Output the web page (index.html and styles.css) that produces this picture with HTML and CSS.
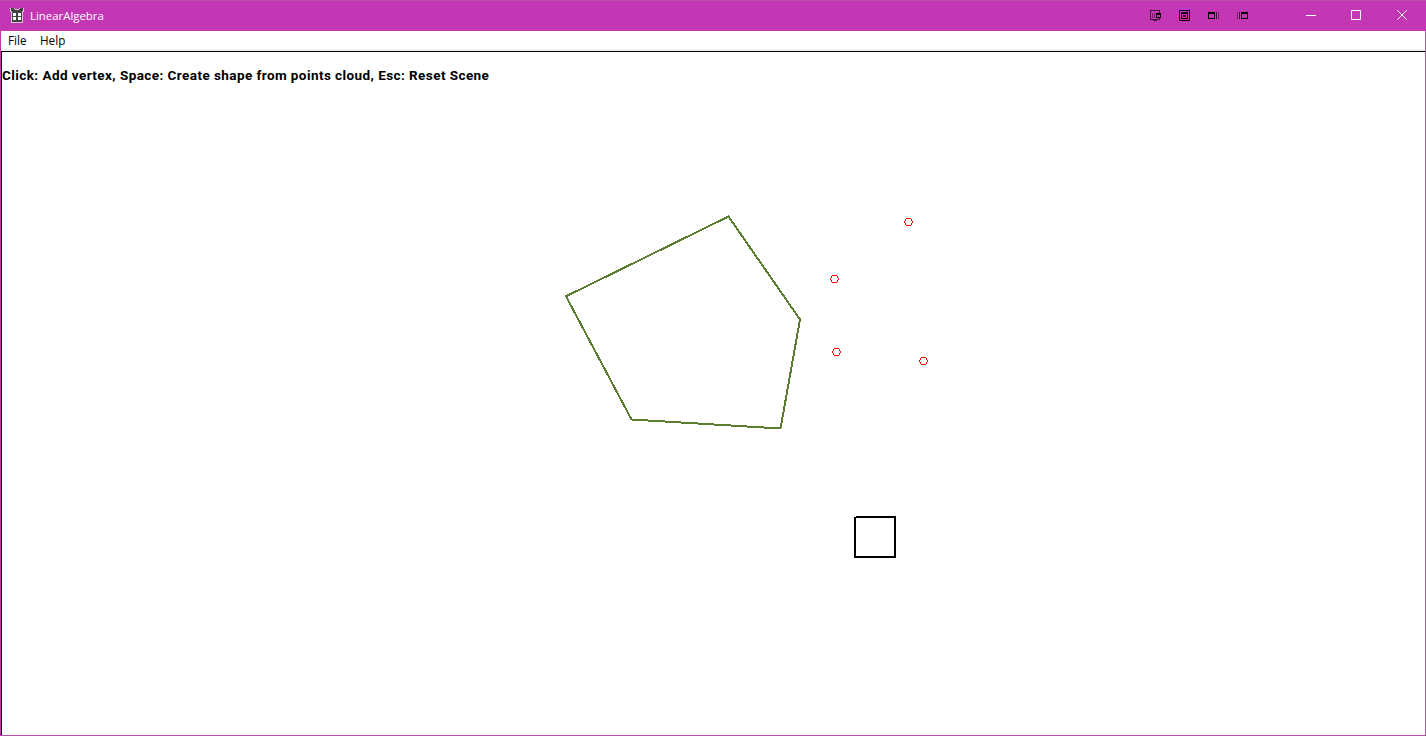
FILE: index.html
```html
<!DOCTYPE html>
<html lang="en">
<head>
<meta charset="utf-8">
<title>LinearAlgebra</title>
<link rel="stylesheet" href="styles.css">
</head>
<body>
<div class="window">
  <header class="titlebar">
    <svg class="app-icon" width="16" height="16" viewBox="0 0 16 16" shape-rendering="crispEdges">
      <path fill="#d8c8d5" d="M1 1h5v1h4V1h5v4h-1v11H2V5H1z"/>
      <path fill="#444" d="M2 1h3v1H2zM11 1h3v1h-3zM2 2h4v1h4V2h4v2h-1v11H3V4H2z"/>
      <path fill="#fff" d="M4 6h3v3H4zM9 6h3v3H9zM4 10h3v3H4zM9 10h3v3H9z"/>
    </svg>
    <span class="title">LinearAlgebra</span>
    <div class="tools">
      <svg width="12" height="12" viewBox="0 0 12 12" shape-rendering="crispEdges">
        <path fill="#42163c" d="M0 0h10v3H9V1H1v8h8V8h1v2H7v1H3v-1H0z"/>
        <path fill="#79236e" d="M2 3h1v5H2zM4 3h1v5H4z"/>
        <path fill="#000" fill-rule="evenodd" d="M6 3h5v5H6zM7 5v2h3V5z"/>
      </svg>
      <svg width="12" height="12" viewBox="0 0 12 12" shape-rendering="crispEdges">
        <path fill="#000" fill-rule="evenodd" d="M0 0h11v11H0zM1 1v9h9V1zM2 2h7v7H2zM3 4v4h5V4z"/>
        <path fill="#35102f" d="M4 5h3v2H4z"/>
      </svg>
      <svg width="12" height="12" viewBox="0 0 12 12" shape-rendering="crispEdges">
        <path fill="#000" fill-rule="evenodd" d="M0 2h7v7H0zM1 4v4h5V4z"/>
        <path fill="#42163c" d="M8 2h1v7H8z"/><path fill="#79236e" d="M10 2h1v7h-1z"/>
      </svg>
      <svg width="12" height="12" viewBox="0 0 12 12" shape-rendering="crispEdges">
        <path fill="#79236e" d="M0 2h1v7H0z"/><path fill="#42163c" d="M2 2h1v7H2z"/>
        <path fill="#000" fill-rule="evenodd" d="M4 2h7v7H4zM5 4v4h5V4z"/>
      </svg>
    </div>
    <div class="controls">
      <svg width="12" height="12" viewBox="0 0 12 12"><path d="M0 5.5h10"/></svg>
      <svg width="12" height="12" viewBox="0 0 12 12"><path d="M.5.5h9v9h-9z"/></svg>
      <svg class="close" width="12" height="12" viewBox="0 0 12 12"><path d="M.2.2l9.6 9.6M9.8.2L.2 9.8"/></svg>
    </div>
  </header>
  <nav class="menubar"><span class="file">File</span><span>Help</span></nav>
  <main class="scene">
    <p class="hint">Click: Add vertex, Space: Create shape from points cloud, Esc: Reset Scene</p>
    <svg class="canvas" width="1423" height="683" viewBox="2 52 1423 683" shape-rendering="crispEdges">
      <defs>
        <path id="point" d="M2 .5h5M7.5 1v2M8.5 3v2M7.5 5v2M2 7.5h5M1.5 5v2M.5 3v2M1.5 1v2"/>
      </defs>
      <path class="shape" d="M728.5 216.5L800 319.5L780.5 428.5L631.5 419.5L566 296.3Z"/>
      <path class="square" d="M856 517H895V557H855V517"/>
      <g class="points">
        <use href="#point" x="904" y="218"/>
        <use href="#point" x="830" y="275"/>
        <use href="#point" x="832" y="348"/>
        <use href="#point" x="919" y="357"/>
      </g>
    </svg>
  </main>
</div>
</body>
</html>
```
FILE: styles.css
```css
* { box-sizing: border-box; }
body { margin: 0; overflow: hidden; }
svg { display: block; flex: none; }
.window {
  display: flex;
  flex-direction: column;
  width: 1426px;
  height: 736px;
  border: 1px solid #b650ab;
  border-left-color: #c437b4;
  background: #fff;
  font-family: "Open Sans", "Noto Sans", sans-serif;
  font-size: 11.7px;
}
.titlebar {
  display: flex;
  align-items: center;
  height: 30px;
  margin: 0 -1px;
  padding: 0 17px 2px 9px;
  background: #c437b4;
  color: #fff;
}
.title { margin-left: 5px; padding-top: 2px; line-height: 16px; font-size: 11.4px; }
.tools { display: flex; gap: 17px; margin-left: auto; margin-right: 57px; padding-top: 2px; }
.controls { display: flex; gap: 33px; padding-top: 2px; }
.controls path { fill: none; stroke: #fff; stroke-width: 1; }
.close { margin-left: 1px; }
.menubar {
  display: flex;
  gap: 13.5px;
  height: 20px;
  padding-left: 7px;
  border-bottom: 2px solid #f0f0f0;
  line-height: 18px;
  color: #000;
}
.scene {
  display: grid;
  flex: 1;
  min-height: 0;
  border-top: 1px solid #000;
  border-left: 1px solid #000;
}
.hint, .canvas { grid-area: 1 / 1; }
.hint {
  margin: 15px 0 0;
  font: bold 13.5px/17px Roboto, "Liberation Sans", sans-serif;
  letter-spacing: .43px;
  white-space: nowrap;
  color: #000;
}
.shape { fill: none; stroke: #5b7d31; stroke-width: 2; }
.square { fill: none; stroke: #000; stroke-width: 2; }
.points { fill: none; stroke: #f00; stroke-width: 1; }
```
